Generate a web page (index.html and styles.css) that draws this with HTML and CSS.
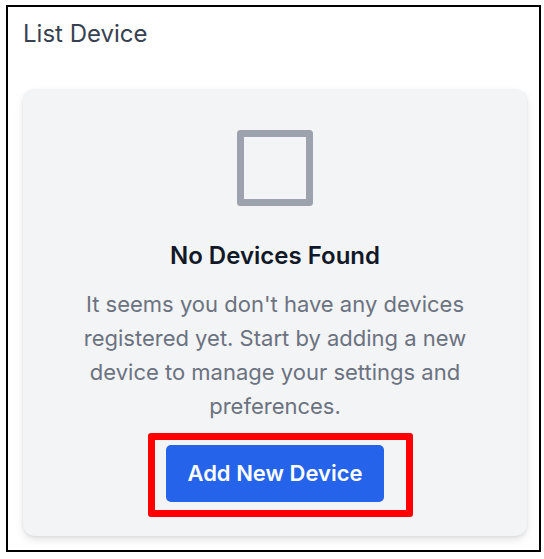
FILE: index.html
```html
<!DOCTYPE html>
<html lang="en">
<head>
<meta charset="utf-8">
<meta name="viewport" content="width=device-width, initial-scale=1">
<title>List Device</title>
<link rel="stylesheet" href="styles.css">
</head>
<body>
<main class="frame">
  <h1 class="page-title">List Device</h1>
  <section class="card">
    <svg class="empty-icon" viewBox="0 0 76 76" aria-hidden="true"><rect x="3.5" y="3.5" width="69" height="69" fill="none" stroke="#9ca3af" stroke-width="7" stroke-linejoin="round"/></svg>
    <h2 class="card-title">No Devices Found</h2>
    <p class="card-text">It seems you don't have any devices registered yet. Start by adding a new device to manage your settings and preferences.</p>
    <div class="action">
      <button class="add-button" type="button">Add New Device</button>
      <span class="highlight"></span>
    </div>
  </section>
</main>
</body>
</html>
```
FILE: styles.css
```css
* {
  box-sizing: border-box;
}

body {
  margin: 0;
  padding: 5px 3px 7px 6px;
  background: #fff;
  font-family: Inter, "Liberation Sans", sans-serif;
}

.frame {
  padding: 12px 12px 14px 15px;
  border: 2px solid #000;
}

.page-title {
  margin: 0 0 40px;
  font-size: 24px;
  line-height: 30px;
  font-weight: 400;
  color: #374151;
}

.card {
  display: flex;
  flex-direction: column;
  align-items: center;
  padding: 41px 56px 34px;
  border-radius: 12px;
  background: #f3f4f6;
  box-shadow: 0 4px 8px rgba(0, 0, 0, 0.1), 0 1px 3px rgba(0, 0, 0, 0.08);
}

.empty-icon {
  width: 76px;
  height: 76px;
}

.card-title {
  margin: 34px 0 15px;
  font-size: 24px;
  line-height: 32px;
  font-weight: 600;
  color: #111827;
}

.card-text {
  margin: 0 0 22px;
  font-size: 22px;
  line-height: 34px;
  color: #6b7280;
  text-align: center;
}

.action {
  position: relative;
}

.highlight {
  position: absolute;
  inset: -12px -29px -15px -18px;
  border: 7px solid #f00;
  border-radius: 3px;
  pointer-events: none;
}

.add-button {
  display: block;
  padding: 14px 21px;
  border: 0;
  border-radius: 5px;
  background: #2563eb;
  color: #fff;
  font: inherit;
  font-size: 22px;
  line-height: 29px;
  font-weight: 600;
}
```
